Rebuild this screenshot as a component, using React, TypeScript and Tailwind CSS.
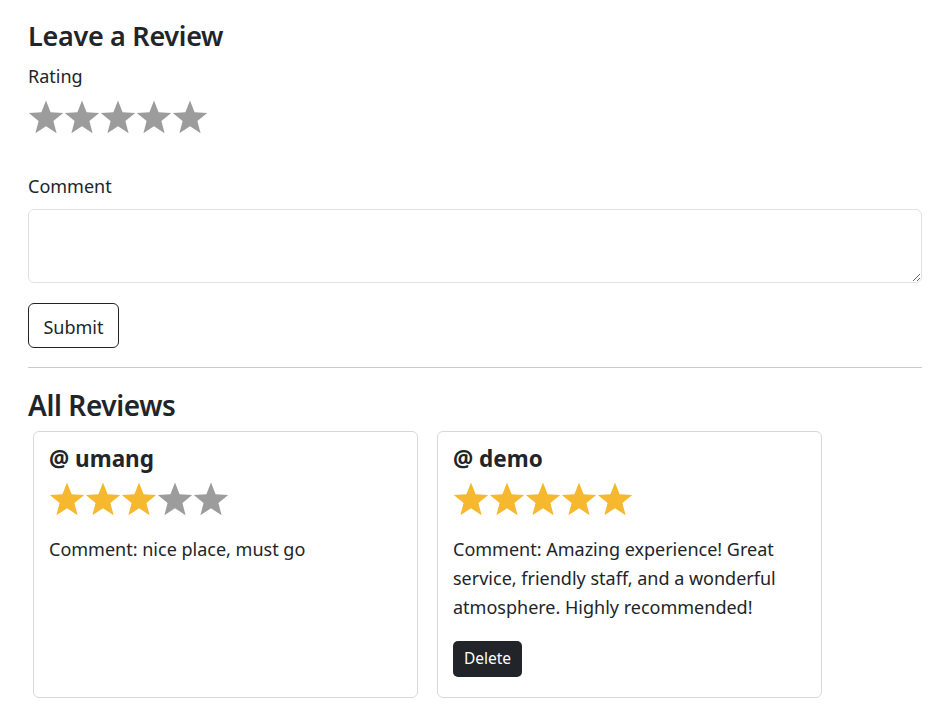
import React from "react";

const font = { fontFamily: '"Noto Sans", "Open Sans", Arial, sans-serif' };

function Star({ filled }: { filled: boolean }) {
  return (
    <svg width="36" height="35" viewBox="0 0 36 35" className="block">
      <polygon
        points="18,0.5 22.6,12.2 35.2,12.9 25.4,20.9 28.6,33.2 18,26.3 7.4,33.2 10.6,20.9 0.8,12.9 13.4,12.2"
        fill={filled ? "#f5b82e" : "#9c9c9c"}
      />
    </svg>
  );
}

function Stars({ value }: { value: number }) {
  return (
    <div className="flex">
      {[1, 2, 3, 4, 5].map((n) => (
        <Star key={n} filled={n <= value} />
      ))}
    </div>
  );
}

const reviews = [
  { author: "umang", rating: 3, comment: "nice place, must go", own: false },
  {
    author: "demo",
    rating: 5,
    comment:
      "Amazing experience! Great service, friendly staff, and a wonderful atmosphere. Highly recommended!",
    own: true,
  },
];

export default function App() {
  return (
    <div className="min-h-screen bg-white text-[#212529]" style={font}>
      <div className="pl-[28px] pt-[21px] w-[922px]">
        {/* Leave a review form */}
        <h4 className="text-[27px] leading-[29px] font-semibold tracking-[-0.3px]">Leave a Review</h4>
        <div className="mt-[14px] text-[18px] leading-[24px]">Rating</div>
        <div className="mt-[12px]">
          <Stars value={0} />
        </div>
        <div className="mt-[39px] text-[18px] leading-[24px]">Comment</div>
        <textarea className="mt-[11px] block w-[894px] h-[74px] border border-[#dee2e6] rounded-[6px] outline-none" />
        <button className="mt-[20px] w-[91px] h-[45px] border border-[#212529] rounded-[6px] text-[18px] leading-[24px] pt-[2px]">
          Submit
        </button>
        <hr className="mt-[19px] border-t border-[#c9cacb]" />

        {/* Reviews */}
        <h3 className="mt-[21px] text-[28px] leading-[33px] font-semibold tracking-[-0.4px]">All Reviews</h3>
        <div className="mt-[9px] ml-[5px] flex gap-[19px]">
          {reviews.map((r) => (
            <div
              key={r.author}
              className="w-[385px] h-[267px] border border-[#d6d8da] rounded-[6px] px-[15px] pt-[15px]"
            >
              <h5 className="text-[22.5px] leading-[24px] font-bold">@ {r.author}</h5>
              <div className="mt-[11px]">
                <Stars value={r.rating} />
              </div>
              <p className="mt-[18px] text-[18px] leading-[29px] pr-[4px]">Comment: {r.comment}</p>
              {r.own && (
                <button className="mt-[19px] w-[69px] h-[36px] bg-[#212529] text-white rounded-[5px] text-[15.5px]">
                  Delete
                </button>
              )}
            </div>
          ))}
        </div>
      </div>
    </div>
  );
}
